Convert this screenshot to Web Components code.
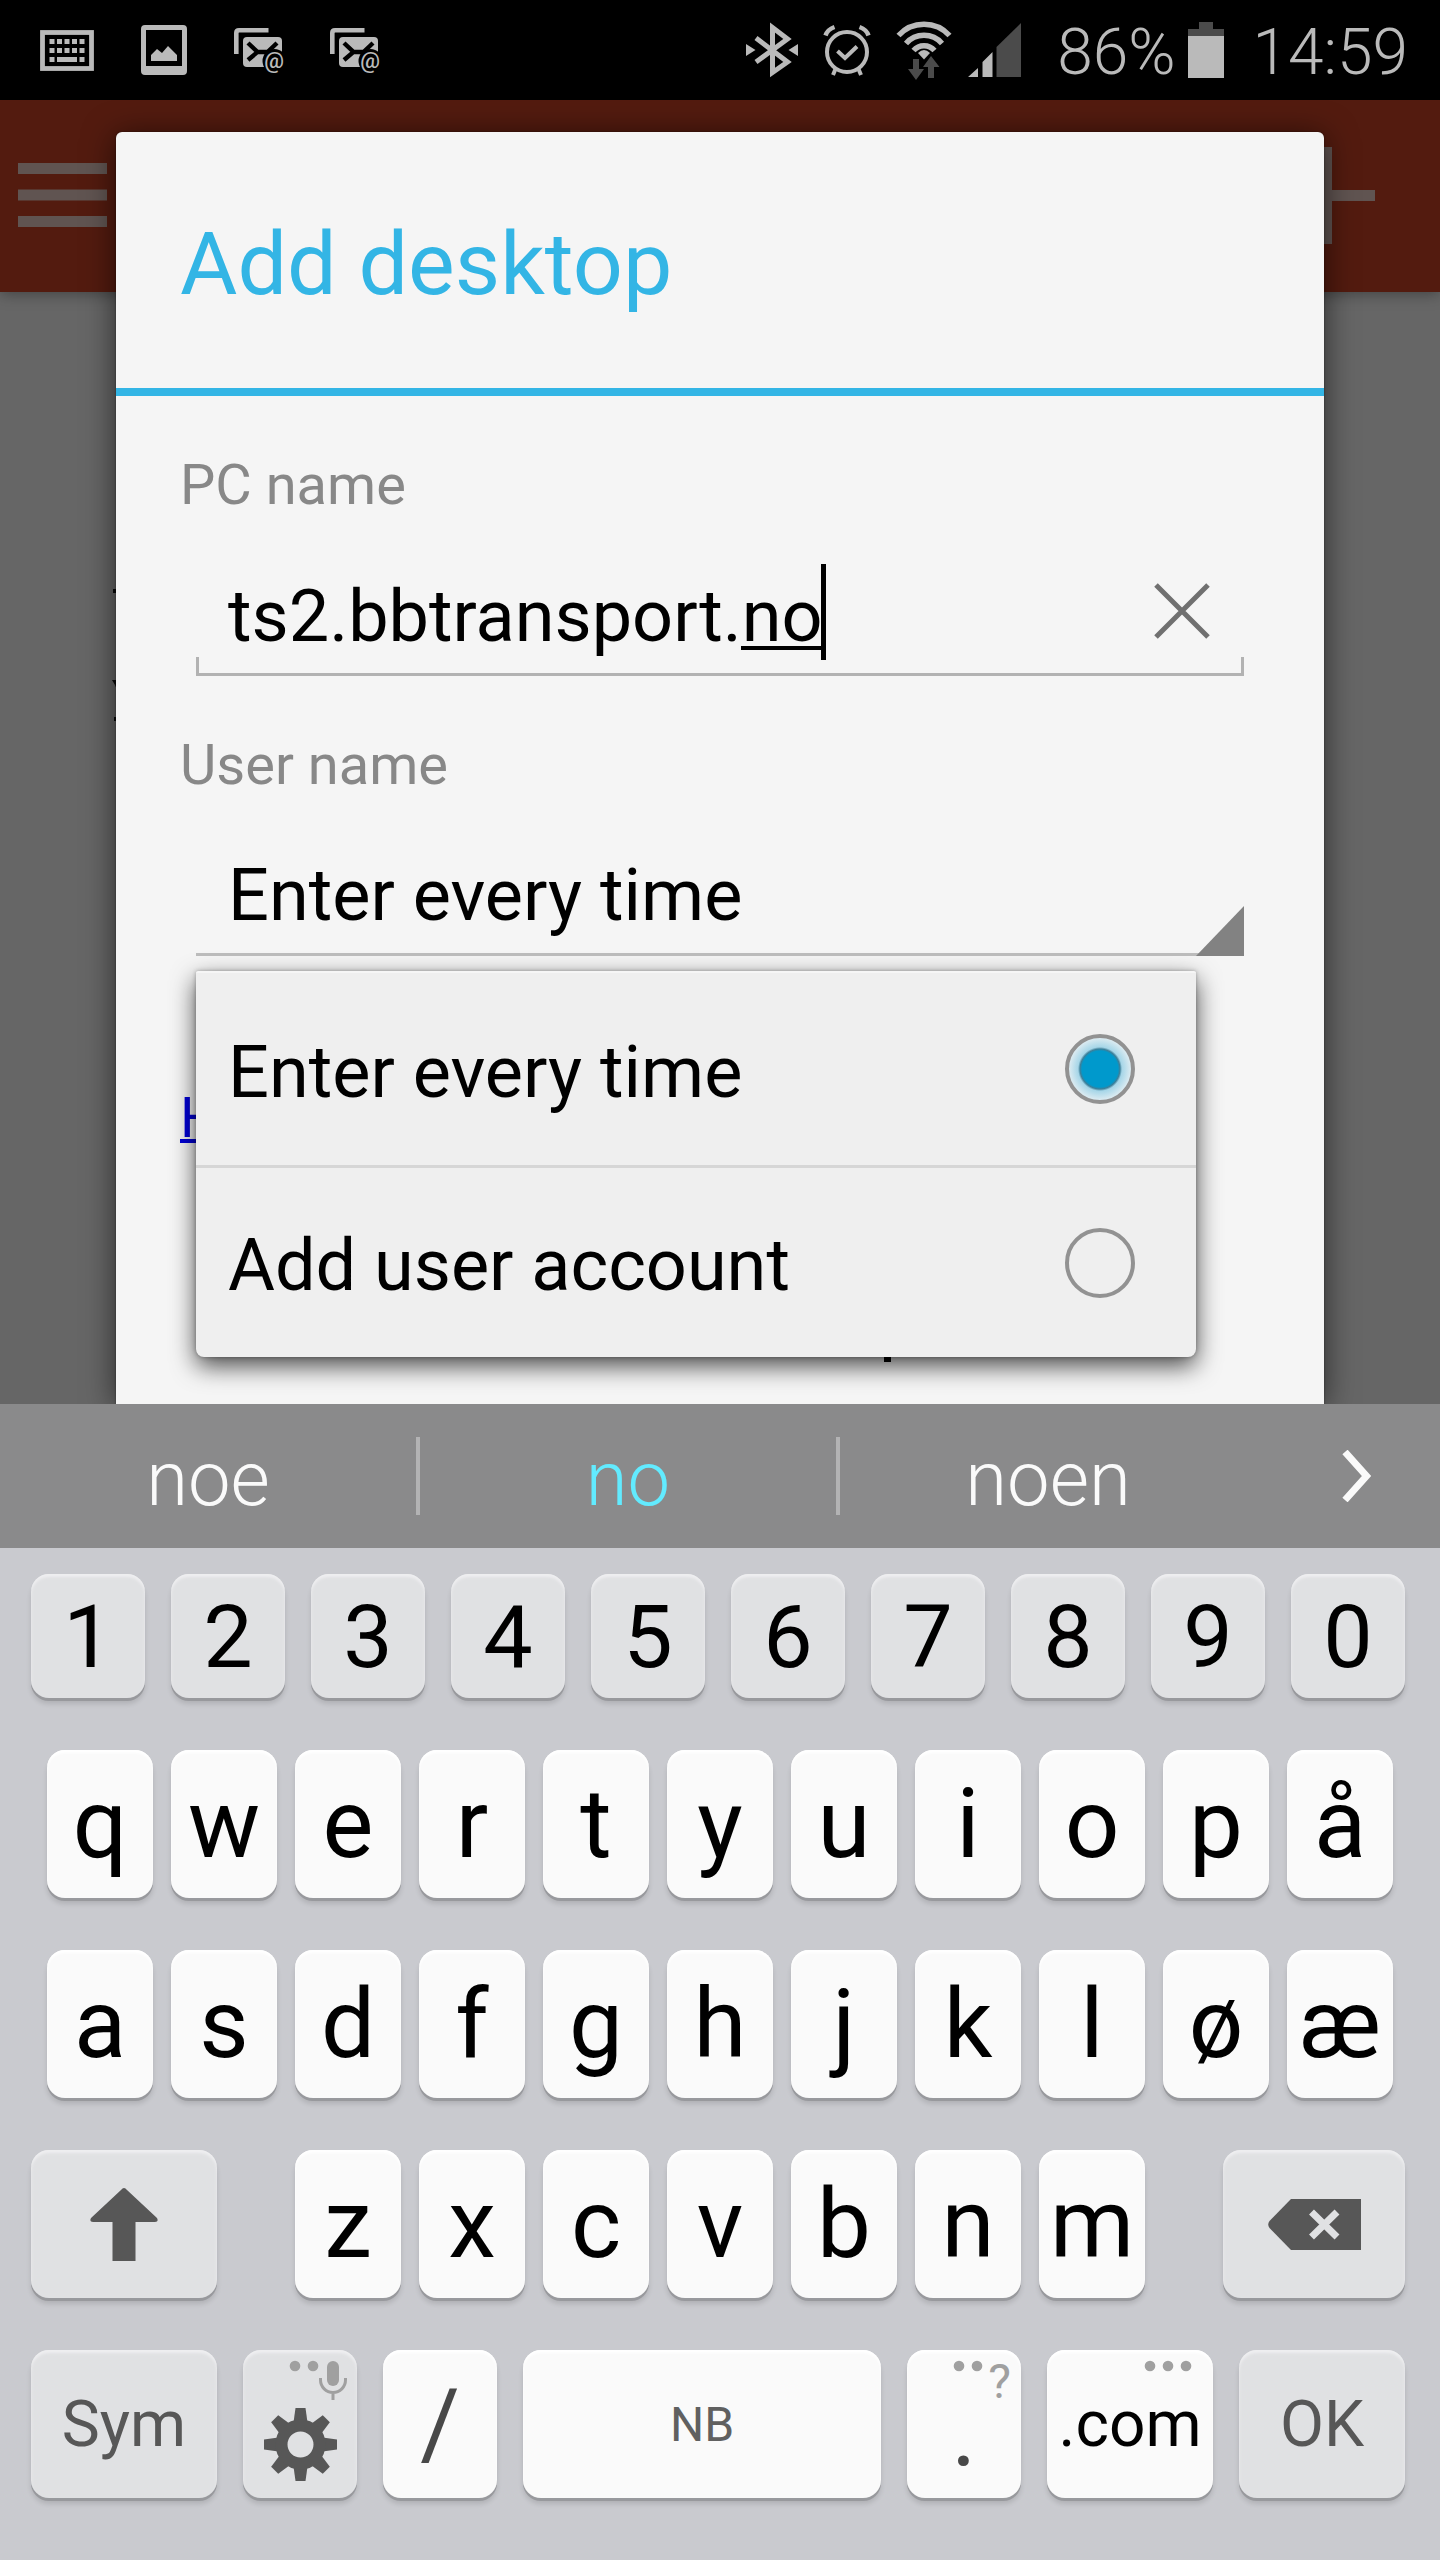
<!DOCTYPE html>
<html lang="en">
<head>
<meta charset="utf-8">
<meta name="viewport" content="width=device-width, initial-scale=1">
<title>Add desktop</title>
<style>
  body {
    margin: 0;
    font-family: Roboto, "Liberation Sans", sans-serif;
    color: #000;
  }
</style>
</head>
<body>
<phone-screen>
  <status-bar slot="status"></status-bar>
  <app-page slot="page"></app-page>
  <app-dialog slot="dialog">
    <span slot="title">Add desktop</span>
    <text-field></text-field>
    <account-picker></account-picker>
    <help-link></help-link>
  </app-dialog>
  <suggestion-bar slot="keyboard"></suggestion-bar>
  <soft-keyboard slot="keyboard"></soft-keyboard>
</phone-screen>

<script>
class BaseElement extends HTMLElement {
    constructor() {
        super();
        this.attachShadow({ mode: 'open' });
    }

    connectedCallback() {
        const template = document.createElement('template');
        template.innerHTML = `
      <style>
        * { box-sizing: border-box; }
        button, input, select { font: inherit; color: inherit; border: 0; margin: 0; padding: 0; background: none; outline: none; }
        svg { display: block; flex: none; }
        ${this.getStyles()}
      </style>
      ${this.getTemplate()}
    `;
        this.shadowRoot.replaceChildren(template.content.cloneNode(true));
    }
}

class PhoneScreen extends BaseElement {
    getTemplate() {
        return `
      <slot name="status"></slot>
      <main>
        <slot name="page"></slot>
        <slot name="dialog"></slot>
      </main>
      <slot name="keyboard"></slot>
    `;
    }

    getStyles() {
        return `
        :host { display: flex; flex-direction: column; min-height: 100vh; background: #666; }
        main { flex: 1; display: grid; overflow: hidden; }
        ::slotted([slot="page"]), ::slotted([slot="dialog"]) { grid-area: 1 / 1; }
    `;
    }
}

class StatusBar extends BaseElement {
    getMailIcon() {
        return `
        <svg width="52" height="56" viewBox="0 -6 52 56" overflow="visible">
          <path d="M2.3 26V5q0-2.7 2.7-2.7H34.5" fill="none" stroke="#bababa" stroke-width="4.6"/>
          <rect x="9" y="9" width="39" height="30" rx="4" fill="#bababa"/>
          <path d="M14 15l9.500 9-9.500 8M23.500 24H33.500L43 15" fill="none" stroke="#000" stroke-width="4.400"/>
          <circle cx="40.500" cy="33" r="12" fill="#000"/>
          <text x="40" y="40" text-anchor="middle" font-size="22" font-weight="500" fill="#bababa">@</text>
        </svg>`;
    }

    getKeyboardIcon() {
        let keys = '';
        for (const y of [9, 18, 27]) {
            for (const x of [9.5, 17, 24.5, 32, 39.5]) {
                keys += `<rect x="${x}" y="${y}" width="5" height="5"/>`;
            }
        }
        return `
        <svg width="54" height="41" viewBox="0 0 54 41" fill="#bababa">
          <rect x="2.500" y="2.500" width="49" height="36" fill="none" stroke="#bababa" stroke-width="4.800"/>
          ${keys}<rect x="17" y="27" width="20" height="5"/>
        </svg>`;
    }

    getTemplate() {
        return `
      <div class="group notices">
        ${this.getKeyboardIcon()}
        <svg width="46" height="50" viewBox="0 0 46 50" fill="#bababa">
          <path fill-rule="evenodd" d="M4 0H42a4 4 0 0 1 4 4V46a4 4 0 0 1-4 4H4a4 4 0 0 1-4-4V4a4 4 0 0 1 4-4ZM5 5V41H41V5Z"/>
          <path d="M10 36V30L16 24 21 28 27 21 36 30V36Z"/>
        </svg>
        <div class="group mails">
          ${this.getMailIcon()}
          ${this.getMailIcon()}
        </div>
      </div>
      <div class="group system">
        <svg width="52" height="56" viewBox="0 0 52 56">
          <path d="M10 16L41.500 40 26.500 50.500V5.500L41.500 17 10 40" fill="none" stroke="#bababa" stroke-width="5"/>
          <path d="M0 22L9.500 28 0 34ZM52 22L42.500 28 52 34Z" fill="#bababa"/>
        </svg>
        <svg width="48" height="52" viewBox="0 0 48 52" fill="none" stroke="#bababa" stroke-width="4">
          <circle cx="24" cy="28" r="20"/>
          <path d="M2.500 11.500Q4.500 5.500 11.500 3M45.500 11.500Q43.500 5.500 36.500 3" stroke-width="4.500"/>
          <path d="M12.500 45L10 51M35.500 45L38 51M14.500 27L22 34 34 22.500"/>
        </svg>
        <div class="group radio">
          <svg width="56" height="60" viewBox="0 0 56 60">
            <g fill="none" stroke="#bababa" stroke-width="5.500">
              <path d="M2.500 15.500A34.500 34.500 0 0 1 53.500 15.500"/>
              <path d="M10 23.500A24 24 0 0 1 46 23.500"/>
              <path d="M17.500 30.500A14 14 0 0 1 38.500 30.500"/>
            </g>
            <path d="M22 33Q28 27 34 33L28 39.500Z" fill="#bababa"/>
            <path d="M17 39h6v10h5l-8 11-8-11h5ZM35 36l8.500 11H38v11H32V47H27Z" fill="#4b4b4b"/>
          </svg>
          <svg width="64" height="54" viewBox="0 0 64 54">
            <path d="M0 54L10 45V54ZM14.500 54V39L24.500 29V54Z" fill="#bababa"/>
            <path d="M28.500 54V24L53 0V54Z" fill="#4b4b4b"/>
          </svg>
        </div>
        <div class="group power">
          <span>86%</span>
          <svg width="36" height="56" viewBox="0 0 36 56">
            <path d="M11 0H25V7H36V14H0V7H11Z" fill="#4b4b4b"/>
            <path d="M0 14H36V56H0Z" fill="#bababa"/>
          </svg>
        </div>
        <time>14:59</time>
      </div>
    `;
    }

    getStyles() {
        return `
        :host {
          display: flex; align-items: center; justify-content: space-between;
          height: 100px; padding: 0 32px 0 40px;
          background: #000; color: #bababa; font-size: 64px; font-weight: 300; line-height: 72px;
        }
        .group { display: flex; align-items: center; }
        .notices { gap: 47px; }
        .mails { gap: 44px; }
        .system { gap: 25px; }
        .radio { gap: 16px; }
        .power { gap: 12px; margin-right: 4px; }
        span, time { padding-top: 6px; }
    `;
    }
}

class AppPage extends BaseElement {
    getTemplate() {
        return `
      <header>
        <button aria-label="Menu">
          <svg width="89" height="64" viewBox="0 0 89 64"><path d="M0 5.500H89M0 32H89M0 58.500H89" stroke="#605451" stroke-width="11"/></svg>
        </button>
        <button aria-label="Add">
          <svg width="97" height="97" viewBox="0 0 97 97"><path d="M0 48.500H97M48.500 0V97" stroke="#605451" stroke-width="11"/></svg>
        </button>
      </header>
      <svg class="copy" width="8" height="300" viewBox="0 0 8 300" fill="#0a0a0a">
        <path d="M1 17h7v4H1ZM0 108h5l3 9v8L3 113ZM2 145h6v4H2ZM8 190Q0 201 8 212ZM8 271q-5 5 0 12Z"/>
      </svg>
    `;
    }

    getStyles() {
        return `
        :host { display: block; background: #666; }
        header {
          display: flex; align-items: center; justify-content: space-between;
          height: 192px; padding: 0 65px 2px 18px;
          background: #531b0f; box-shadow: 0 2px 14px rgba(0, 0, 0, .35);
        }
        .copy { margin: 280px 0 0 112px; }
    `;
    }
}

class AppDialog extends BaseElement {
    getTemplate() {
        return `
      <section role="dialog" aria-labelledby="title">
        <h1 id="title"><slot name="title"></slot></h1>
        <slot></slot>
      </section>
    `;
    }

    getStyles() {
        return `
        :host {
          display: block; margin: 32px 116px 0; position: relative;
          background: #f5f5f5; border-radius: 6px 6px 0 0;
          box-shadow: 0 0 2px rgba(0, 0, 0, .5), 0 4px 32px rgba(0, 0, 0, .6);
        }
        h1 {
          margin: 0; padding: 84px 64px 76px;
          border-bottom: 8px solid #33b5e5;
          color: #33b5e5; font-size: 88px; font-weight: 400; line-height: 96px;
        }
    `;
    }
}

const fieldStyles = `
        :host { display: block; padding: 57px 80px 0 64px; }
        .caption { display: block; color: #888; font-size: 56px; line-height: 64px; margin-bottom: 39px; }
        .control { position: relative; margin-left: 16px; height: 120px; font-size: 72px; }
`;

class TextField extends BaseElement {
    getTemplate() {
        return `
      <label class="caption" for="pc">PC name</label>
      <div class="control">
        <input id="pc" type="text" value="ts2.bbtransport.no" spellcheck="false">
        <button aria-label="Clear">
          <svg width="56" height="56" viewBox="0 0 56 56"><path d="M2 2L54 54M54 2L2 54" stroke="#707070" stroke-width="5"/></svg>
        </button>
        <span class="composing"></span>
      </div>
    `;
    }

    getStyles() {
        return `${fieldStyles}
        .control { display: flex; align-items: center; padding: 0 34px 0 32px; }
        .control::after {
          content: ""; position: absolute; left: 0; right: 0; bottom: 0; height: 16px;
          border: 3px solid #b2b2b2; border-top: 0; pointer-events: none;
        }
        input { flex: 1; min-width: 0; height: 112px; }
        button { margin-bottom: 10px; }
        /* word being composed, with the caret at its end */
        .composing {
          position: absolute; left: 545px; top: 8px; width: 85px; height: 96px;
          border-right: 5px solid #000;
          background: linear-gradient(#000, #000) 0 82px / 100% 4px no-repeat;
        }
    `;
    }
}

class AccountPicker extends BaseElement {
    getTemplate() {
        return `
      <label class="caption" for="user">User name</label>
      <div class="control">
        <select id="user">
          <option>Enter every time</option>
        </select>
        <svg class="arrow" width="48" height="50" viewBox="0 0 48 50"><path d="M48 0V50H0Z" fill="#828282"/></svg>
        <div class="mark"></div>
        <div class="menu">
          <label><span>Enter every time</span><input type="radio" name="account" checked></label>
          <label><span>Add user account</span><input type="radio" name="account"></label>
        </div>
      </div>
    `;
    }

    getStyles() {
        return `${fieldStyles}
        .control { border-bottom: 3px solid #bdbdbd; }
        select { appearance: none; width: 100%; height: 118px; padding: 0 32px; }
        .arrow { position: absolute; right: 0; bottom: -3px; }
        .menu {
          position: absolute; top: calc(100% + 18px); left: 0; right: 48px; z-index: 1;
          background: #efefef; border-radius: 2px 2px 8px 8px;
          border-top: 2px solid #f6f6f6;
          box-shadow: 0 0 4px rgba(0, 0, 0, .3), 0 9px 24px rgba(0, 0, 0, .7);
        }
        .menu label {
          display: flex; align-items: center; justify-content: space-between;
          height: 192px; padding: 0 61px 0 32px;
        }
        .menu span { padding-top: 6px; }
        .menu label + label { border-top: 3px solid #d6d6d6; }
        input {
          appearance: none; width: 70px; height: 70px;
          border: 4px solid #929292; border-radius: 50%;
        }
        input:checked {
          background: radial-gradient(circle, #0099cc 18px, #3d7f99 20px, #a6d6e8 22px, #dcebf1 31px);
        }
        /* foot of the line that continues below the menu */
        .mark { position: absolute; left: 688px; top: 518px; width: 7px; height: 8px; background: #000; }
    `;
    }
}

class HelpLink extends BaseElement {
    getTemplate() {
        return `<a href="#help">H</a>`;
    }

    getStyles() {
        return `
        :host { display: block; padding: 130px 64px 0; }
        a { color: #0000d8; font-size: 56px; line-height: 64px; text-decoration-thickness: 4px; }
    `;
    }
}

class SuggestionBar extends BaseElement {
    getTemplate() {
        return `
      <button class="word">noe</button>
      <button class="word current">no</button>
      <button class="word last">noen</button>
      <button class="more" aria-label="More">
        <svg width="44" height="52" viewBox="-14 0 44 52"><path d="M3 2L24.500 26 3 50" fill="none" stroke="#fafafa" stroke-width="7"/></svg>
      </button>
    `;
    }

    getStyles() {
        return `
        :host {
          display: flex; align-items: center; height: 144px;
          background: #8a8a8b; color: #fafafa; font-size: 76px; font-weight: 300;
        }
        .word { flex: 416 1 0; height: 78px; padding-top: 6px; line-height: 72px; border-right: 4px solid #b3b3b4; }
        .word.last { border-color: transparent; }
        .current { color: #62ebff; }
        .more { flex: 180 1 0; display: flex; justify-content: center; }
    `;
    }
}

class KeyCap extends BaseElement {
    getTemplate() {
        return `<button aria-label="${this.getAttribute('label')}"><slot></slot></button><slot name="hint"></slot>`;
    }

    getStyles() {
        return `
        :host { display: block; position: relative; flex: ${this.getAttribute('span')} 1 0; min-width: 0; height: 148px; font-size: 96px; }
        :host([kind~="digit"]) { height: 124px; font-size: 88px; }
        :host([kind~="word"]) { font-size: 64px; }
        :host([kind~="small"]) { font-size: 48px; color: #606060; }
        :host([kind~="mark"]) { color: #484848; }
        :host([kind~="grey"]) { color: #575757; }
        button {
          display: flex; align-items: center; justify-content: center;
          width: 100%; height: 100%; border-radius: 18px; background: #fafafa; white-space: nowrap;
          box-shadow: inset 0 3px 3px #fff, 0 3px 0 #98999d, 0 6px 5px rgba(0, 0, 0, .12);
        }
        :host([kind~="grey"]) button, :host([kind~="digit"]) button {
          background: #e0e1e3;
          box-shadow: inset 0 3px 3px #efeff1, 0 3px 0 #98999d, 0 6px 5px rgba(0, 0, 0, .12);
        }
        :host([kind~="low"]) button { padding-top: 16px; }
        :host([kind~="gear"]) button { padding-top: 40px; }
        ::slotted([slot="hint"]) {
          position: absolute; top: 8px; right: 10px; display: flex; gap: 6px;
          color: #a0a0a0; font-size: 48px; line-height: 48px; pointer-events: none;
        }
    `;
    }
}

class SoftKeyboard extends BaseElement {
    getKeys(letters, span, kind = '') {
        return [...letters].map(c => `<key-cap span="${span}" kind="${kind}" label="${c}">${c}</key-cap>`).join('');
    }

    getDots(count) {
        let dots = '';
        for (let i = 0; i < count; i++) {
            dots += `<circle cx="${5 + i * 18}" cy="8" r="5.3"/>`;
        }
        return `<svg width="${count * 18 - 8}" height="40" viewBox="0 0 ${count * 18 - 8} 40" fill="#a0a0a0" overflow="visible">${dots}</svg>`;
    }

    getGear() {
        let teeth = '';
        for (let a = 0; a < 360; a += 45) {
            teeth += `<path d="M31.500 0H41.500L44 18H29Z" transform="rotate(${a} 36.500 36.500)"/>`;
        }
        return `<svg width="73" height="73" viewBox="0 0 73 73" fill="#575757">
          ${teeth}<circle cx="36.500" cy="36.500" r="19" fill="none" stroke="#575757" stroke-width="12"/></svg>`;
    }

    getTemplate() {
        return `
      <div class="row digits">${this.getKeys('1234567890', 114, 'digit')}</div>
      <div class="row letters">${this.getKeys('qwertyuiopå', 106)}</div>
      <div class="row letters">${this.getKeys('asdfghjkløæ', 106)}</div>
      <div class="row shifted">
        <key-cap span="186" kind="grey" label="Shift">
          <svg width="68" height="73" viewBox="0 0 68 73"><path d="M31 2Q34-2 37 2L67 30Q69 34 65 34H45.500V73H22.500V34H3Q-1 34 1 30Z" fill="#575757"/></svg>
        </key-cap>
        <div class="row inner">${this.getKeys('zxcvbnm', 106)}</div>
        <key-cap span="182" kind="grey" label="Backspace">
          <svg width="93" height="51" viewBox="0 0 93 51">
            <path d="M23 0H93V51H23L1.500 29Q-1 25.500 1.500 22Z" fill="#575757"/>
            <path d="M43.500 13L69 38M69 13L43.500 38" stroke="#e0e1e3" stroke-width="7"/>
          </svg>
        </key-cap>
      </div>
      <div class="row">
        <key-cap span="186" kind="grey word" label="Sym">Sym</key-cap>
        <key-cap span="114" kind="grey gear" label="Settings">${this.getGear()}
          <span slot="hint" style="gap: 1px">${this.getDots(2)}
            <svg width="28" height="44" viewBox="0 0 28 44">
              <rect x="8" y="3" width="12" height="25" rx="6" fill="#a0a0a0"/>
              <path d="M1.500 20V22A12.500 12.500 0 0 0 26.500 22V20M14 34V42" fill="none" stroke="#a0a0a0" stroke-width="3"/>
            </svg>
          </span>
        </key-cap>
        <key-cap span="114" kind="mark" label="/">/</key-cap>
        <key-cap span="358" kind="small" label="Space">NB</key-cap>
        <key-cap span="114" kind="mark low" label=".">.<span slot="hint">${this.getDots(2)}?</span></key-cap>
        <key-cap span="166" kind="word" label=".com">.com<span slot="hint" class="end">${this.getDots(3)}</span></key-cap>
        <key-cap span="166" kind="grey word" label="OK">OK</key-cap>
      </div>
    `;
    }

    getStyles() {
        return `
        :host { display: flex; flex-direction: column; gap: 52px; padding: 26px 35px 62px 31px; background: #c9cacf; }
        .row { display: flex; gap: 26px; }
        .letters { gap: 18px; padding: 0 12px 0 16px; }
        .shifted { gap: 78px; }
        .inner { flex: 850 1 0; gap: 18px; }
        .end { padding-right: 12px; }
    `;
    }
}

customElements.define('phone-screen', PhoneScreen);
customElements.define('status-bar', StatusBar);
customElements.define('app-page', AppPage);
customElements.define('app-dialog', AppDialog);
customElements.define('text-field', TextField);
customElements.define('account-picker', AccountPicker);
customElements.define('help-link', HelpLink);
customElements.define('suggestion-bar', SuggestionBar);
customElements.define('key-cap', KeyCap);
customElements.define('soft-keyboard', SoftKeyboard);
</script>
</body>
</html>
